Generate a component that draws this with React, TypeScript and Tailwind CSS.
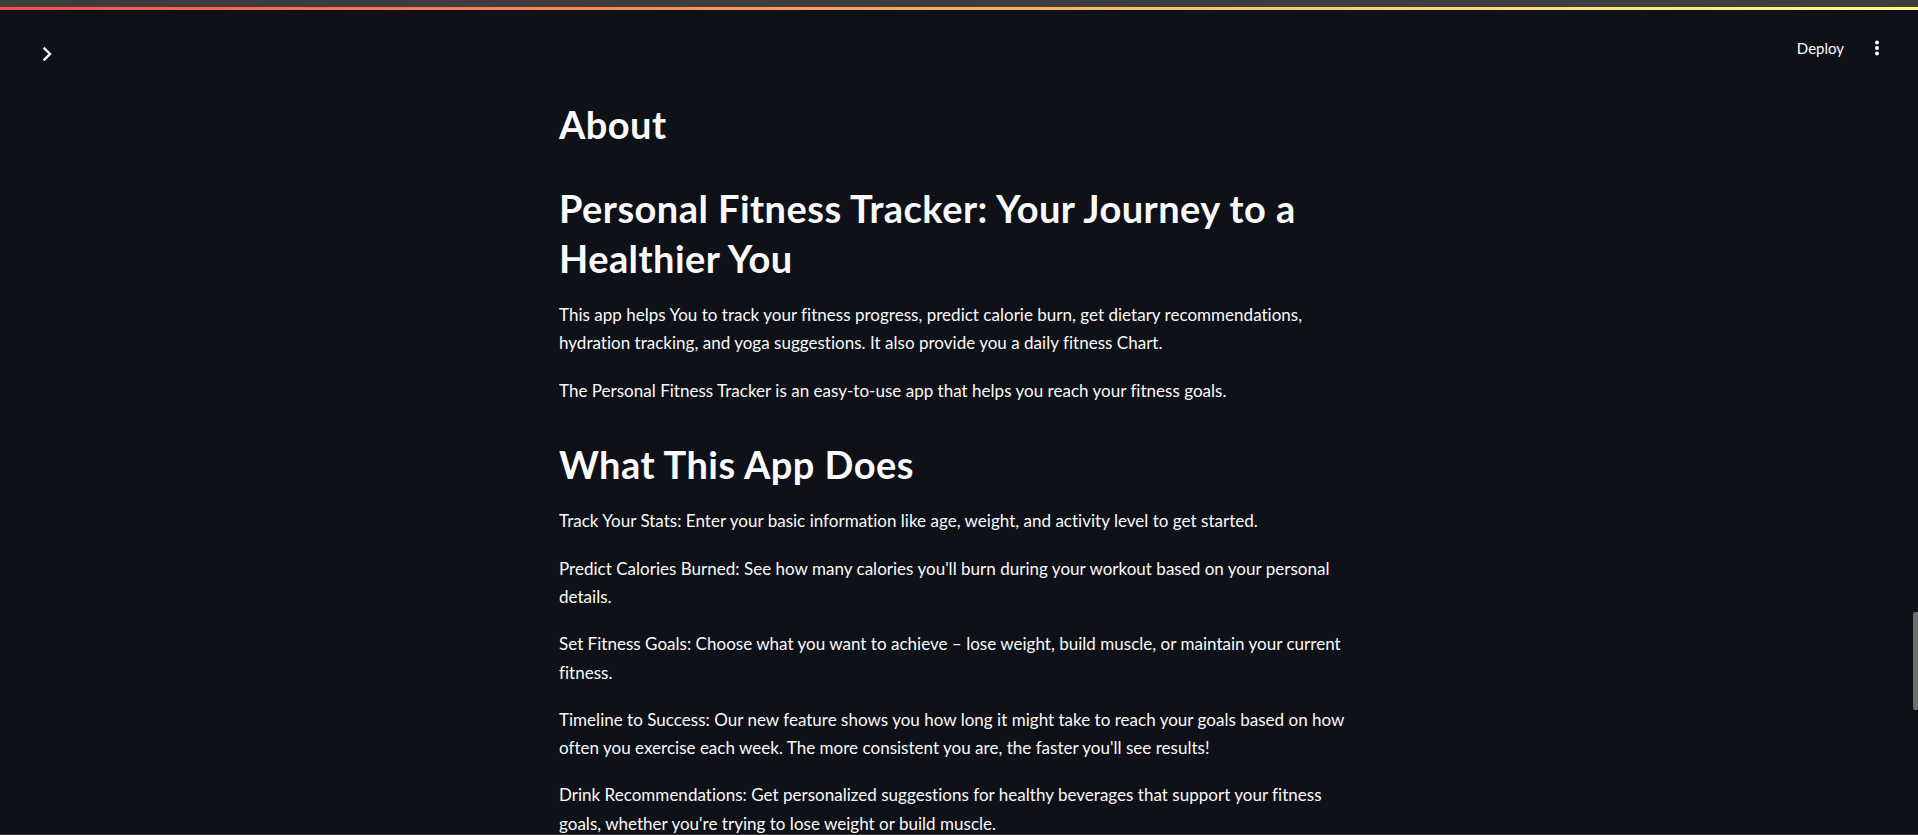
import React from 'react';

const features = [
  'Track Your Stats: Enter your basic information like age, weight, and activity level to get started.',
  "Predict Calories Burned: See how many calories you'll burn during your workout based on your personal details.",
  'Set Fitness Goals: Choose what you want to achieve – lose weight, build muscle, or maintain your current fitness.',
  "Timeline to Success: Our new feature shows you how long it might take to reach your goals based on how often you exercise each week. The more consistent you are, the faster you'll see results!",
  "Drink Recommendations: Get personalized suggestions for healthy beverages that support your fitness goals, whether you're trying to lose weight or build muscle.",
];

function Heading({ children }: { children: React.ReactNode }) {
  return (
    <h2 className="mt-[15px] mb-[18.5px] text-[38px] leading-[50px] font-bold tracking-[0.45px] text-[#fafafa]">
      {children}
    </h2>
  );
}

function Para({ children }: { children: React.ReactNode }) {
  return <p className="mb-[18.8px] text-[17px] leading-[28.4px] tracking-[0.02px] text-[#fafafa]">{children}</p>;
}

export default function App() {
  return (
    <div
      className="relative h-[835px] overflow-hidden bg-[#0e1117] text-[#fafafa]"
      style={{ fontFamily: 'Lato, "Liberation Sans", sans-serif' }}
    >
      {/* browser strip + streamlit decoration */}
      <div className="h-[7px] bg-[#3d3d3d]" />
      <div className="h-[3px] bg-gradient-to-r from-[#ff4b4b] to-[#fffd80]" />

      {/* header */}
      <div className="flex h-[74px] items-start justify-between">
        <button className="ml-[43px] mt-[37px] text-[#fafafa]">
          <svg width="9" height="14" viewBox="0 0 9 14" fill="none">
            <path d="M1.5 1.5 L7 7 L1.5 12.5" stroke="currentColor" strokeWidth="2.4" strokeLinecap="square" />
          </svg>
        </button>
        <div className="mr-[38px] mt-[28px] flex items-center gap-[30px]">
          <span className="text-[15px] leading-[20px]">Deploy</span>
          <svg width="6" height="16" viewBox="0 0 6 16" fill="currentColor">
            <circle cx="3" cy="2.5" r="2" />
            <circle cx="3" cy="8" r="2" />
            <circle cx="3" cy="13.5" r="2" />
          </svg>
        </div>
      </div>

      {/* main */}
      <main className="mx-auto flex w-[800px] flex-col">
        <Heading>About</Heading>
        <Heading>Personal Fitness Tracker: Your Journey to a Healthier You</Heading>
        <Para>
          This app helps You to track your fitness progress, predict calorie burn, get dietary recommendations,
          hydration tracking, and yoga suggestions. It also provide you a daily fitness Chart.
        </Para>
        <Para>The Personal Fitness Tracker is an easy-to-use app that helps you reach your fitness goals.</Para>
        <Heading>What This App Does</Heading>
        {features.map((f) => (
          <Para key={f}>{f}</Para>
        ))}
      </main>

      {/* scrollbar thumb */}
      <div className="absolute right-0 top-[612px] h-[98px] w-[5px] rounded-l-[2px] bg-[#6e6e6e]" />
      <div className="absolute bottom-0 left-0 h-[1px] w-full bg-[#3a3a3a]" />
    </div>
  );
}
